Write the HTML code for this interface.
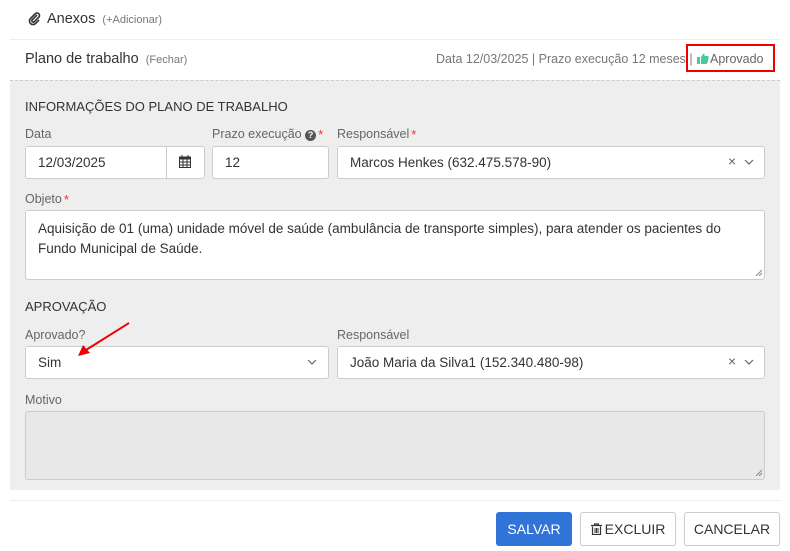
<!DOCTYPE html>
<html><head><meta charset="utf-8"><style>
*{box-sizing:border-box;margin:0;padding:0}
body{width:790px;height:551px;background:#fff;font-family:"Liberation Sans",sans-serif;color:#333;position:relative;overflow:hidden}
.a{position:absolute}
.lbl{position:absolute;font-size:12.5px;color:#666}
.inp{position:absolute;background:#fff;border:1px solid #ccc;border-radius:3px;font-size:13.5px;color:#333;padding-left:12px;display:flex;align-items:center}
.star{color:#e33;font-size:13px;vertical-align:top;margin-left:2px}
.btn{position:absolute;top:512px;height:34px;border-radius:3px;font-size:14px;display:flex;align-items:center;justify-content:center}
</style></head><body>
<svg class="a" style="left:28px;top:12px" width="14" height="14" viewBox="0 0 14 14"><path d="M9 3 L4 8 a1.5 1.5 0 0 0 2 2 L11 5 a2.5 2.5 0 0 0 -3.5 -3.5 L2.5 6.5 a3.5 3.5 0 0 0 5 5 L11 8" fill="none" stroke="#333" stroke-width="1.6"/></svg>
<div class="a" style="left:47px;top:11px;font-size:14.5px">Anexos <span style="font-size:11px;color:#777;margin-left:3px">(+Adicionar)</span></div>
<div class="a" style="left:10px;top:39px;width:770px;height:1px;background:#eee"></div>
<div class="a" style="left:25px;top:51px;font-size:14.5px">Plano de trabalho <span style="font-size:11px;color:#777;margin-left:3px">(Fechar)</span></div>
<div class="a" style="left:436px;top:52px;font-size:12.5px;color:#777">Data 12/03/2025 | Prazo execução 12 meses |</div>
<div class="a" style="left:686px;top:44px;width:89px;height:28px;border:2px solid #e00"></div>
<svg class="a" style="left:697px;top:53px" width="12" height="11" viewBox="0 0 12 11"><rect x="0" y="4" width="3" height="7" fill="#4c9"/><path d="M4 4 L6.5 0.5 Q8 0.5 7.5 3 L11 3 Q12 3.5 11.5 5 L10.5 10 Q10 11 9 11 L4 11Z" fill="#4c9"/></svg>
<div class="a" style="left:710px;top:52px;font-size:12.5px;color:#666">Aprovado</div>
<div class="a" style="left:10px;top:80px;width:770px;height:410px;background:#eee;border-top:1px dashed #ccc"></div>
<div class="a" style="left:25px;top:99px;font-size:13px;color:#333">INFORMAÇÕES DO PLANO DE TRABALHO</div>
<div class="lbl" style="left:25px;top:127px">Data</div>
<div class="lbl" style="left:212px;top:127px">Prazo execução <span style="display:inline-block;width:11px;height:11px;border-radius:50%;background:#555;color:#fff;font-size:9px;text-align:center;line-height:11px;font-weight:bold">?</span><span class="star">*</span></div>
<div class="lbl" style="left:337px;top:127px">Responsável<span class="star">*</span></div>
<div class="inp" style="left:25px;top:146px;width:180px;height:33px">12/03/2025</div>
<div class="a" style="left:166px;top:146px;width:1px;height:33px;background:#ccc"></div>
<svg class="a" style="left:179px;top:155px" width="12" height="13" viewBox="0 0 12 13"><rect x="0.5" y="2" width="11" height="10.5" fill="none" stroke="#333"/><rect x="0.5" y="2" width="11" height="2.5" fill="#333"/><path d="M3 0v3M9 0v3M0.5 7h11M0.5 10h11M4 4.5v8M8 4.5v8" stroke="#333"/></svg>
<div class="inp" style="left:212px;top:146px;width:117px;height:33px">12</div>
<div class="inp" style="left:337px;top:146px;width:428px;height:33px">Marcos Henkes (632.475.578-90)</div>
<div class="a" style="left:728px;top:153px;font-size:14px;color:#666">×</div>
<svg class="a" style="left:744px;top:159px" width="10" height="6" viewBox="0 0 10 6"><path d="M1 1l4 4 4-4" fill="none" stroke="#666" stroke-width="1.2"/></svg>
<div class="lbl" style="left:25px;top:192px">Objeto<span class="star">*</span></div>
<div class="inp" style="left:25px;top:210px;width:740px;height:70px;align-items:flex-start;padding-top:8px;line-height:20px;padding-right:10px">Aquisição de 01 (uma) unidade móvel de saúde (ambulância de transporte simples), para atender os pacientes do Fundo Municipal de Saúde.</div>
<svg class="a" style="left:755px;top:269px" width="7" height="7" viewBox="0 0 7 7"><path d="M1 7L7 1M4 7L7 4" stroke="#888"/></svg>
<div class="a" style="left:25px;top:299px;font-size:13px">APROVAÇÃO</div>
<div class="lbl" style="left:25px;top:328px">Aprovado?</div>
<div class="lbl" style="left:337px;top:328px">Responsável</div>
<div class="inp" style="left:25px;top:346px;width:304px;height:33px">Sim</div>
<svg class="a" style="left:307px;top:359px" width="10" height="6" viewBox="0 0 10 6"><path d="M1 1l4 4 4-4" fill="none" stroke="#666" stroke-width="1.2"/></svg>
<div class="inp" style="left:337px;top:346px;width:428px;height:33px">João Maria da Silva1 (152.340.480-98)</div>
<div class="a" style="left:728px;top:353px;font-size:14px;color:#666">×</div>
<svg class="a" style="left:744px;top:359px" width="10" height="6" viewBox="0 0 10 6"><path d="M1 1l4 4 4-4" fill="none" stroke="#666" stroke-width="1.2"/></svg>
<div class="lbl" style="left:25px;top:393px">Motivo</div>
<div class="inp" style="left:25px;top:411px;width:740px;height:69px;background:#e8e8e8"></div>
<svg class="a" style="left:755px;top:469px" width="7" height="7" viewBox="0 0 7 7"><path d="M1 7L7 1M4 7L7 4" stroke="#888"/></svg>
<svg class="a" style="left:70px;top:320px" width="65" height="42" viewBox="0 0 65 42"><path d="M59 3 L16 30" stroke="#e00" stroke-width="2"/><path d="M8 36 L13 25 L20 33Z" fill="#e00"/></svg>
<div class="a" style="left:10px;top:500px;width:770px;height:1px;background:#eee"></div>
<div class="btn" style="left:496px;width:76px;background:#3174d8;color:#fff">SALVAR</div>
<div class="btn" style="left:580px;width:96px;border:1px solid #ccc;color:#333"><svg width="11" height="12" viewBox="0 0 11 12" style="margin-right:3px"><path d="M0 2.5h11M3.5 2.5V1h4v1.5" fill="none" stroke="#333" stroke-width="1.2"/><path d="M1.5 3.5V11.5h8V3.5" fill="none" stroke="#333" stroke-width="1.2"/><path d="M4 5v5M5.5 5v5M7 5v5" stroke="#333"/></svg>EXCLUIR</div>
<div class="btn" style="left:684px;width:96px;border:1px solid #ccc;color:#333">CANCELAR</div>
</body></html>
